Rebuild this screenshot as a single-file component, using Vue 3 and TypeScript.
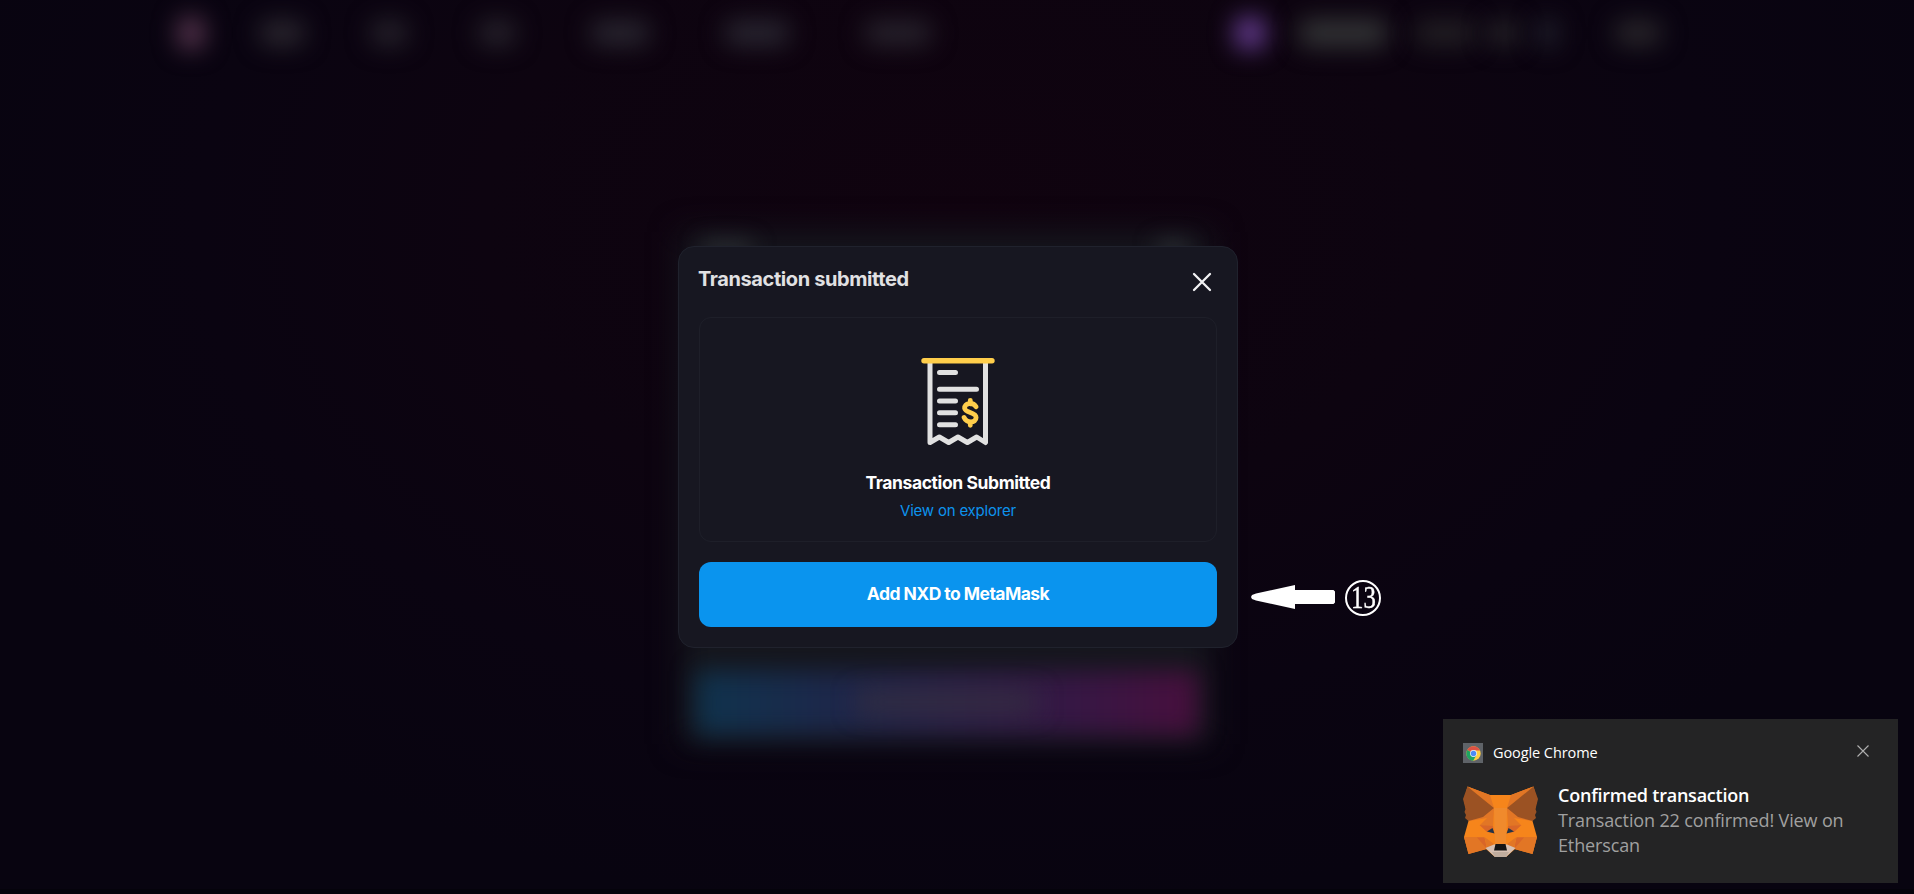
<script setup lang="ts">
interface Blob { x: number; w: number; h: number; c: string }

const navBlobs: Blob[] = [
  { x: 191, w: 26, h: 32, c: '#58364f' },
  { x: 282, w: 44, h: 24, c: '#2c2830' },
  { x: 389, w: 36, h: 24, c: '#27232c' },
  { x: 497, w: 36, h: 24, c: '#28242d' },
  { x: 620, w: 58, h: 24, c: '#2a2731' },
  { x: 757, w: 64, h: 24, c: '#2a2732' },
  { x: 898, w: 66, h: 24, c: '#28232d' },
  { x: 1250, w: 30, h: 32, c: '#653c90' },
  { x: 1343, w: 88, h: 28, c: '#323335' },
  { x: 1445, w: 60, h: 24, c: '#232024' },
  { x: 1503, w: 30, h: 24, c: '#272529' },
  { x: 1547, w: 22, h: 28, c: '#20202c' },
  { x: 1638, w: 46, h: 24, c: '#2a272b' },
]
</script>

<template>
  <main class="screen">
    <div class="backdrop" aria-hidden="true">
      <i
        v-for="b in navBlobs"
        :key="b.x"
        class="blob"
        :style="{ left: b.x - b.w / 2 + 'px', top: 33 - b.h / 2 + 'px', width: b.w + 'px', height: b.h + 'px', background: b.c }"
      ></i>
      <div class="ghost-card"></div>
      <div class="ghost-light left"></div>
      <div class="ghost-light right"></div>
      <div class="ghost-button"></div>
      <div class="ghost-label"></div>
    </div>

    <section class="modal" role="dialog" aria-label="Transaction submitted">
      <header class="modal-head">
        <h1><span>Transaction submitted</span></h1>
        <button class="close" aria-label="Close">
          <svg width="20" height="20" viewBox="0 0 20 20"><path d="M2 2 18 18M18 2 2 18" stroke="#f2f2f4" stroke-width="2.3" stroke-linecap="round" /></svg>
        </button>
      </header>
      <div class="panel">
        <svg class="receipt" width="76" height="90" viewBox="0 0 76 90" fill="none">
          <g stroke="#e1e1e1" stroke-width="5" stroke-linecap="round" stroke-linejoin="round">
            <path d="M10 6V85.500L19.300 80 28.700 85.500 38 80 47.400 85.500 56.700 80 65.500 85.500V6" />
            <path d="M19.500 15.500H35.500M19.500 32.200H56.500M19.500 44H35.500M19.500 55.800H35.500M19.500 67.800H35.500" />
          </g>
          <path d="M4 3.800H72" stroke="#ffce4b" stroke-width="5.400" stroke-linecap="round" />
          <path d="M55.500 51C52 45.500 43.500 47.500 44 52.500 44.600 57.500 55.500 56 55.500 61.700 55.500 67.500 46 67.500 43.500 61.700M49.700 44.500V48M49.700 66V69.500" transform="translate(.6 -1.200)" stroke="#ffce4b" stroke-width="4.800" stroke-linecap="round" stroke-linejoin="round" />
        </svg>
        <h2><span>Transaction Submitted</span></h2>
        <a class="link"><span>View on explorer</span></a>
      </div>
      <button class="add"><span>Add NXD to MetaMask</span></button>
    </section>

    <div class="callout">
      <svg width="84" height="24" viewBox="0 0 84 24"><path d="M1 10 5 8.500 44 0V5H82.500L84 6.500V17.500L82.500 19H44V24L5 15.500 1 14 0 12Z" fill="#fff" /></svg>
      <div class="step"><span>13</span></div>
    </div>

    <aside class="toast">
      <header class="toast-head">
        <svg width="20" height="20" viewBox="0 0 20 20">
          <path fill="#5f6368" d="M0 0h20v20H0z" />
          <circle cx="10.500" cy="10.500" r="7.200" fill="#ffcd40" />
          <path d="M10.500 10.500 4.260 6.900A7.200 7.200 0 0 1 16.740 6.900L17 7.400H10.500Z" fill="#dd5144" />
          <path d="M10.500 10.500 4.260 6.900A7.200 7.200 0 0 0 10.200 17.700L13.200 12.400Z" fill="#1da462" />
          <circle cx="10.500" cy="10.500" r="3.400" fill="#f1f1f1" />
          <circle cx="10.500" cy="10.500" r="2.700" fill="#4c8bf5" />
        </svg>
        <span class="app">Google Chrome</span>
        <svg class="dismiss" width="12" height="12" viewBox="0 0 12 12"><path d="M.5.5 11.500 11.500M11.500.5.5 11.500" stroke="#b0b0b0" stroke-width="1.100" /></svg>
      </header>
      <div class="toast-body">
        <svg width="75" height="72" viewBox="0 0 75 72">
          <path fill="#f6851b" d="M4.500.5 27 9H48L70.500.5 74 14 69.500 35 74 51 69.500 68 52 63 43 71H32L23 63 5.500 68 1 51 5.500 35 1 14Z" />
          <path fill="#e27625" d="M4.500.5 27 9 31 22ZM70.500.5 48 9 44 22ZM31 22 30 41 17 39 24 32 6 35ZM44 22 45 41 58 39 51 32 69 35ZM1 51H21L24 63 5.500 68ZM74 51H54L51 63 69.500 68Z" />
          <path fill="#9b5223" d="M4.500.5 31 22 20 31 5.500 35 2 32 3 29 1.500 26 2.500 23 0 13ZM70.500.5 44 22 55 31 69.500 35 73 32 72 29 73.500 26 72.500 23 75 13Z" />
          <path fill="#d96628" d="M16.500 39 30 40 31 47 24 46ZM58.500 39 45 40 44 47 51 46ZM14 51.500H21.500L24 63ZM61 51.500H53.500L51 63Z" />
          <path fill="#e27625" d="M21.500 51 31 58 24 63ZM53.500 51 44 58 51 63Z" />
          <path fill="#f08a2c" d="M31 22H44L43 58H32Z" />
          <path fill="#233447" d="M24 45.500 29.500 42 31.500 47.500ZM51 45.500 45.500 42 43.500 47.500Z" />
          <path fill="#d7c1b3" d="M22.500 62 31 58.500H44L52.500 62 43 71H32Z" />
          <path fill="#c0ad9e" d="M29 66H46L43 71H32Z" />
          <path fill="#161616" d="M32.500 58H42.500L44 64.500H31Z" />
        </svg>
        <div class="toast-text">
          <strong><span>Confirmed transaction</span></strong>
          <p><span>Transaction 22 confirmed! View on</span><br /><span class="second">Etherscan</span></p>
        </div>
      </div>
    </aside>
  </main>
</template>

<style>
body { margin: 0; background: #080410; }
</style>

<style scoped>
.screen {
  position: relative;
  width: 1914px;
  height: 894px;
  overflow: hidden;
  display: grid;
  place-items: start center;
  box-sizing: border-box;
  padding-top: 246px;
  background: radial-gradient(ellipse 1050px 700px at 957px 220px, #10030f 0%, #0d0410 45%, #0a0411 72%, #080410 100%);
  font-family: Inter, "Liberation Sans", sans-serif;
  color: #fff;
}
.screen::after { content: ""; position: absolute; inset: auto 0 0; height: 5px; background: #05030b; }
h1, h2, p { margin: 0; }
button { border: 0; padding: 0; font-family: inherit; }
.backdrop { position: absolute; inset: 0; }
.blob { position: absolute; border-radius: 8px; filter: blur(12px); }
.ghost-card { position: absolute; left: 680px; top: 232px; width: 532px; height: 512px; background: #15161d; filter: blur(15px); }
.ghost-light { position: absolute; top: 242px; height: 14px; background: #303438; filter: blur(11px); }
.ghost-light.left { left: 702px; width: 50px; }
.ghost-light.right { left: 1157px; width: 32px; }
.ghost-button { position: absolute; left: 696px; top: 671px; width: 502px; height: 64px; background: linear-gradient(90deg, #0f334d, #1d274a 28%, #2b2147 50%, #361744 75%, #480f3d); filter: blur(12px); }
.ghost-label { position: absolute; left: 858px; top: 694px; width: 178px; height: 16px; background: #35303f; filter: blur(13px); }

.modal {
  position: relative;
  left: 1px;
  box-sizing: border-box;
  width: 560px;
  height: 402px;
  padding: 20px;
  border: 1px solid #20222d;
  border-radius: 16px;
  background: #171721;
  display: flex;
  flex-direction: column;
}
.modal-head { display: flex; justify-content: space-between; height: 50px; }
h1 { margin-left: -1px; font-size: 20px; line-height: 25px; font-weight: 650; letter-spacing: -.4px; color: #e1e1e3; }
.close { width: 20px; height: 20px; margin: 5px 5px 0 0; background: none; }
.close svg { display: block; }
.panel { box-sizing: border-box; height: 225px; border: 1px solid #1e1f29; border-radius: 12px; display: flex; flex-direction: column; align-items: center; padding-top: 39px; }
.receipt { display: block; }
h2 { margin-top: 24px; font-size: 17.500px; line-height: 24px; font-weight: 650; letter-spacing: -.4px; }
.link { margin-top: 5px; font-size: 15px; line-height: 22px; letter-spacing: -.2px; color: #0d93ed; }
.add { box-sizing: border-box; margin-top: 20px; height: 65px; padding-bottom: 2px; border-radius: 12px; background: #0a94ee; color: #fff; font-size: 17.500px; font-weight: 650; letter-spacing: -.55px; }

.callout { position: absolute; left: 1251px; top: 580px; display: flex; align-items: center; gap: 10px; }
.callout svg { margin-top: -2px; }
.step { box-sizing: border-box; width: 36px; height: 36px; border: 2px solid #fff; border-radius: 50%; display: grid; place-items: center; font: 31px/32px "Liberation Serif", serif; }
.step span { transform: scaleX(.8); -webkit-text-stroke: .4px #fff; }

.toast { position: absolute; left: 1443px; top: 719px; box-sizing: border-box; width: 455px; height: 164px; padding: 24px 30px 0 20px; background: #242425; font-family: "Open Sans", "Noto Sans", sans-serif; }
.toast-head { display: flex; align-items: center; height: 20px; }
.app { margin-left: 10px; font-size: 14.500px; line-height: 20px; letter-spacing: -.08px; }
.dismiss { margin: -4px -1px 0 auto; }
.toast-body { display: flex; gap: 20px; margin-top: 23px; }
.toast-text { font-size: 18px; line-height: 25px; white-space: nowrap; margin-top: -3px; letter-spacing: -.13px; }
.toast-text strong { display: block; font-weight: 600; letter-spacing: -.23px; }
.toast-text p { color: #a0a0a0; }
</style>
